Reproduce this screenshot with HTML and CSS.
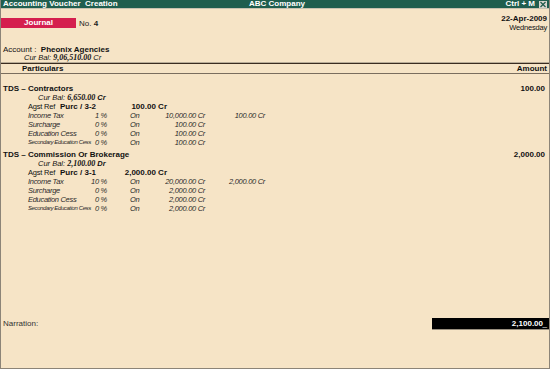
FILE: index.html
```html
<!DOCTYPE html>
<html lang="en">
<head>
    <meta charset="UTF-8">
    <title>Accounting Voucher Creation</title>
    <link rel="stylesheet" href="styles.css">
</head>
<body>
    <div class="window">
        <div class="titlebar">
            <span class="tb-left">Accounting Voucher&nbsp; Creation</span>
            <span class="tb-center">ABC Company</span>
            <span class="tb-right">Ctrl + M <span class="close">
                <svg width="8" height="7" viewBox="0 0 8 7"><path d="M1.5 1 L6.5 6 M6.5 1 L1.5 6" stroke="#1e5a4a" stroke-width="1.2"/></svg>
            </span></span>
        </div>

        <div class="voucher-head">
            <div class="vtype">
                <span class="journal">Journal</span>
                <span class="vno">No. <b>4</b></span>
            </div>
            <div class="vdate">
                <div class="date">22-Apr-2009</div>
                <div class="day">Wednesday</div>
            </div>
        </div>

        <div class="account">
            <div>Account :&nbsp; <b>Pheonix Agencies</b></div>
            <div class="curbal acc-bal"><i>Cur Bal:</i> <span class="num">9,06,510.00</span> <i>Cr</i></div>
        </div>

        <div class="cols">
            <span class="col-part">Particulars</span>
            <span class="col-amt">Amount</span>
        </div>

        <div class="entries">
            <div class="ledger first">
                <span>TDS – Contractors</span>
                <span>100.00</span>
            </div>
            <div class="curbal"><i>Cur Bal:</i> <span class="num">6,650.00</span> <b><i>Cr</i></b></div>
            <div class="agst">
                <span class="ag-label">Agst Ref</span>
                <span class="ag-ref">Purc / 3-2</span>
                <span class="ag-amt">100.00 Cr</span>
            </div>
            <div class="tax"><span class="t-name">Income Tax</span><span class="t-pct">1 %</span><span class="t-on">On</span><span class="t-amt">10,000.00 Cr</span><span class="t-tds">100.00 Cr</span></div>
            <div class="tax"><span class="t-name">Surcharge</span><span class="t-pct">0 %</span><span class="t-on">On</span><span class="t-amt">100.00 Cr</span></div>
            <div class="tax"><span class="t-name">Education Cess</span><span class="t-pct">0 %</span><span class="t-on">On</span><span class="t-amt">100.00 Cr</span></div>
            <div class="tax"><span class="t-name small">Secondary Education Cess</span><span class="t-pct">0 %</span><span class="t-on">On</span><span class="t-amt">100.00 Cr</span></div>

            <div class="ledger second">
                <span>TDS – Commission Or Brokerage</span>
                <span>2,000.00</span>
            </div>
            <div class="curbal"><i>Cur Bal:</i> <span class="num">2,100.00</span> <b><i>Dr</i></b></div>
            <div class="agst">
                <span class="ag-label">Agst Ref</span>
                <span class="ag-ref">Purc / 3-1</span>
                <span class="ag-amt">2,000.00 Cr</span>
            </div>
            <div class="tax"><span class="t-name">Income Tax</span><span class="t-pct">10 %</span><span class="t-on">On</span><span class="t-amt">20,000.00 Cr</span><span class="t-tds">2,000.00 Cr</span></div>
            <div class="tax"><span class="t-name">Surcharge</span><span class="t-pct">0 %</span><span class="t-on">On</span><span class="t-amt">2,000.00 Cr</span></div>
            <div class="tax"><span class="t-name">Education Cess</span><span class="t-pct">0 %</span><span class="t-on">On</span><span class="t-amt">2,000.00 Cr</span></div>
            <div class="tax"><span class="t-name small">Secondary Education Cess</span><span class="t-pct">0 %</span><span class="t-on">On</span><span class="t-amt">2,000.00 Cr</span></div>
        </div>

        <div class="narration">
            <span>Narration:</span>
            <span class="total">2,100.00<span class="cursor">_</span></span>
        </div>
    </div>
</body>
</html>
```

FILE: styles.css
```css
html, body {
    margin: 0;
    padding: 0;
}
body {
    font-family: "Liberation Sans", Arial, sans-serif;
    font-size: 8px;
    color: #111;
    background-color: #f6e4c6;
}
.window {
    width: 550px;
    height: 369px;
    box-sizing: border-box;
    border-left: 1px solid #8c8478;
    border-right: 1px solid #8c8478;
    border-bottom: 1px solid #8c8478;
    display: flex;
    flex-direction: column;
}
.titlebar {
    height: 8px;
    line-height: 8px;
    background-color: #1f5e4e;
    color: #fff;
    font-weight: bold;
    display: flex;
    justify-content: space-between;
    padding: 0 2px 0 2px;
    border-bottom: 1px solid #c8c2b0;
    position: relative;
}
.tb-center {
    position: absolute;
    left: 248px;
}
.tb-right {
    display: flex;
    align-items: center;
    gap: 4px;
}
.close {
    display: inline-flex;
    width: 8px;
    height: 7px;
    background-color: #d8d4cc;
}
.voucher-head {
    display: flex;
    justify-content: space-between;
    margin-top: 4px;
}
.vtype {
    display: flex;
    align-items: center;
    gap: 3px;
}
.journal {
    width: 75px;
    height: 10px;
    line-height: 10px;
    background-color: #d51f4e;
    color: #fff;
    font-weight: bold;
    text-align: center;
}
.vno {
    color: #222;
}
.vdate {
    text-align: right;
    padding-right: 2px;
    padding-top: 1px;
}
.date {
    font-weight: bold;
    line-height: 9px;
}
.day {
    font-size: 7.5px;
    line-height: 10px;
    letter-spacing: -0.2px;
}
.account {
    margin-top: 12px;
    padding-left: 2px;
    line-height: 9px;
}
.curbal {
    padding-left: 37px;
    line-height: 9px;
    font-size: 7.5px;
}
.curbal i {
    font-style: italic;
}
.acc-bal {
    padding-left: 21px;
    line-height: 8px;
}
.num {
    font-family: "Liberation Serif", "Times New Roman", serif;
    font-weight: bold;
    font-style: italic;
    font-size: 8px;
}
.cols {
    margin-top: 0;
    border-top: 1px solid #b9ad98;
    box-shadow: inset 0 1px 0 #3a2c20;
    padding-top: 1px;
    height: 9px;
    line-height: 9px;
    border-bottom: 1px solid #7a6e5e;
    display: flex;
    justify-content: space-between;
    font-weight: bold;
}
.col-part {
    padding-left: 21px;
}
.col-amt {
    padding-right: 2px;
}
.entries {
    padding-top: 10px;
}
.ledger {
    display: flex;
    justify-content: space-between;
    font-weight: bold;
    line-height: 9px;
    padding: 0 4px 0 2px;
}
.ledger.second {
    margin-top: 3px;
}
.agst {
    display: flex;
    line-height: 9px;
    padding-left: 27px;
}
.ag-label {
    width: 32px;
    font-size: 7.5px;
    letter-spacing: -0.2px;
}
.ag-ref {
    width: 62px;
    font-weight: bold;
}
.ag-amt {
    width: 45px;
    text-align: right;
    font-weight: bold;
}
.tax {
    display: flex;
    line-height: 9px;
    padding-left: 27px;
    font-style: italic;
    font-size: 7.5px;
    letter-spacing: -0.3px;
    color: #2a2a2a;
}
.t-name {
    width: 62px;
    white-space: nowrap;
}
.t-name.small {
    font-size: 6px;
    letter-spacing: -0.4px;
}
.t-pct {
    width: 17px;
    text-align: right;
}
.t-on {
    margin-left: 23px;
    width: 20px;
}
.t-amt {
    width: 55px;
    text-align: right;
}
.t-tds {
    width: 60px;
    text-align: right;
}
.narration {
    margin-top: auto;
    margin-bottom: 39px;
    display: flex;
    justify-content: space-between;
    align-items: center;
    padding-left: 2px;
    color: #333;
}
.total {
    width: 117px;
    height: 11px;
    line-height: 11px;
    background-color: #000;
    color: #fff;
    font-weight: bold;
    text-align: right;
    box-sizing: border-box;
    padding-right: 6px;
    box-shadow: 0 1px 0 #9a9080;
    position: relative;
}
.cursor {
    position: absolute;
    right: 2px;
    top: 0;
    font-weight: normal;
}
```
